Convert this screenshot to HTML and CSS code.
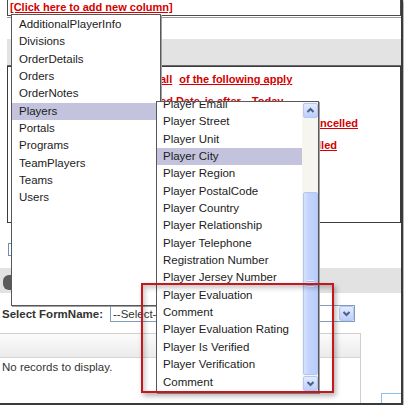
FILE: index.html
```html
<!DOCTYPE html>
<html>
<head>
<meta charset="utf-8">
<title>Form columns</title>
<link rel="stylesheet" href="styles.css">
</head>
<body>
<div class="shot">
  <div class="addbar"><a class="link" href="#">[Click here to add new column]</a></div>
  <div class="toolpanel"><div class="band"></div></div>
  <div class="rules">
    <div class="rule r1"><a class="link gap7" href="#">all</a><a class="link" href="#">of the following apply</a></div>
    <div class="rule r2"><a class="link gap5" href="#">Registered Date</a><a class="link gap11" href="#">is after</a><a class="link" href="#">Today</a></div>
    <div class="rule r3"><a class="link" href="#">Cancelled</a></div>
    <div class="rule r4"><a class="link" href="#">Cancelled</a></div>
  </div>
  <div class="inputrow"><span class="tinybox"></span></div>
  <div class="band2"><span class="pill"></span></div>
  <div class="formrow">
    <label class="formlabel">Select FormName:</label>
    <div class="selectbox">
      <span>--Select--</span>
      <span class="sbtn"><svg width="13" height="13" viewBox="0 0 13 13"><polyline points="3.5,5 6.5,8 9.5,5" fill="none" stroke="#4d6185" stroke-width="2"/></svg></span>
    </div>
  </div>
  <div class="gridwrap">
    <div class="grid">
      <div class="gridhead"></div>
      <div class="norec">No records to display.</div>
    </div>
    <div class="side"><span class="pager"></span></div>
  </div>

  <ul class="dd dd-tables">
    <li>AdditionalPlayerInfo</li>
    <li>Divisions</li>
    <li>OrderDetails</li>
    <li>Orders</li>
    <li>OrderNotes</li>
    <li class="sel">Players</li>
    <li>Portals</li>
    <li>Programs</li>
    <li>TeamPlayers</li>
    <li>Teams</li>
    <li>Users</li>
  </ul>

  <div class="dd dd-cols">
    <ul class="cols-list">
      <li>Player Email</li>
      <li>Player Street</li>
      <li>Player Unit</li>
      <li class="sel">Player City</li>
      <li>Player Region</li>
      <li>Player PostalCode</li>
      <li>Player Country</li>
      <li>Player Relationship</li>
      <li>Player Telephone</li>
      <li>Registration Number</li>
      <li>Player Jersey Number</li>
      <li>Player Evaluation</li>
      <li>Comment</li>
      <li>Player Evaluation Rating</li>
      <li>Player Is Verified</li>
      <li>Player Verification</li>
      <li>Comment</li>
    </ul>
    <div class="scroll">
      <span class="sbtn up"><svg width="13" height="13" viewBox="0 0 13 13"><polyline points="3.5,8 6.5,5 9.5,8" fill="none" stroke="#4d6185" stroke-width="2"/></svg></span>
      <span class="track"></span>
      <span class="thumb"><span class="grip"></span></span>
      <span class="sbtn down"><svg width="13" height="13" viewBox="0 0 13 13"><polyline points="3.5,5 6.5,8 9.5,5" fill="none" stroke="#4d6185" stroke-width="2"/></svg></span>
    </div>
  </div>

  <div class="callout"></div>
</div>
</body>
</html>
```

FILE: styles.css
```css
* {
  box-sizing: border-box;
}

body {
  margin: 0;
  background: #fff;
  font-family: "Liberation Sans", Arial, sans-serif;
  font-size: 11.5px;
  color: #222;
}

.shot {
  position: relative;
  width: 403px;
  height: 405px;
  border-right: 2px solid #3a3a3a;
  border-bottom: 2px solid #3a3a3a;
  box-shadow: 1px 1px 3px rgba(0, 0, 0, 0.45);
  overflow: hidden;
  background: #fff;
}

.link {
  color: #d40000;
  font-weight: bold;
  font-size: 11px;
  text-decoration: underline;
}

.addbar {
  margin-left: 7px;
  height: 16px;
  border: 1px solid #4a4a4a;
  border-top: none;
  padding-left: 2px;
  line-height: 14px;
}

.toolpanel {
  margin: 1px 0 0 7px;
  border-top: 1px solid #9a9a9a;
  border-bottom: 1px solid #6a6a6a;
  padding-top: 21px;
}

.band {
  height: 26px;
  background: #e3e3e3;
}

.rules {
  margin-left: 7px;
  height: 157px;
  border: 1px solid #3a3a3a;
  padding-top: 1px;
}

.rule {
  line-height: 22px;
  height: 22px;
  white-space: nowrap;
}

.r1 { padding-left: 152px; }
.r2 { padding-left: 108px; }
.r3 { padding-left: 298px; }
.r4 { padding-left: 277px; }

.gap7 { margin-right: 7px; }
.gap5 { margin-right: 5px; }
.gap11 { margin-right: 11px; }

.inputrow {
  margin: 20px 0 0 8px;
  height: 13px;
}

.tinybox {
  display: block;
  width: 40px;
  height: 13px;
  border: 1px solid #6b8fc0;
}

.band2 {
  margin-top: 12px;
  height: 25px;
  background: #e2e2e2;
  padding: 7px 0 0 3px;
}

.pill {
  display: block;
  width: 22px;
  height: 15px;
  border-radius: 6px;
  background: #5a5a5a;
}

.formrow {
  margin-top: 12px;
  height: 17px;
  display: flex;
  align-items: center;
}

.formlabel {
  width: 110px;
  padding-left: 2px;
  font-weight: bold;
  color: #333;
}

.selectbox {
  width: 245px;
  height: 17px;
  border: 1px solid #7f9db9;
  display: flex;
  align-items: center;
  justify-content: space-between;
  padding-left: 2px;
  color: #333;
}

.sbtn {
  display: flex;
  align-items: center;
  justify-content: center;
  width: 15px;
  height: 15px;
  border: 1px solid #b4c8f6;
  border-radius: 2px;
  background: linear-gradient(#e3ebfe, #bccffb);
}

.gridwrap {
  margin-top: 11px;
  height: 72px;
  display: flex;
}

.grid {
  width: 363px;
  border-top: 1px solid #cfcfcf;
  border-right: 1px solid #cfcfcf;
}

.gridhead {
  height: 24px;
  background: linear-gradient(#fbfbfb, #ebebeb);
  border-bottom: 1px solid #d4d4d4;
}

.norec {
  line-height: 19px;
  padding-left: 2px;
  color: #333;
}

.side {
  padding: 60px 0 0 20px;
}

.pager {
  display: block;
  width: 20px;
  height: 16px;
  border: 1px solid #8ec0ee;
  border-right: none;
}

/* dropdown lists */
.dd {
  position: absolute;
  margin: 0;
  padding: 0;
  list-style: none;
  background: #fff;
  border: 1px solid #585858;
  box-shadow: 1px 1px 0 #a0a0a0;
  overflow: hidden;
  color: #1c1c1c;
}

.dd li {
  height: 17.35px;
  line-height: 17.35px;
  white-space: nowrap;
}

.dd .sel {
  background: #c3c3dd;
}

.dd-tables {
  left: 11px;
  top: 14px;
  width: 150px;
  height: 292px;
  padding-top: 1px;
}

.dd-tables li {
  padding-left: 7px;
}

.dd-cols {
  left: 156px;
  top: 101px;
  width: 163px;
  height: 292px;
  display: flex;
}

.cols-list {
  flex: 1;
  align-self: flex-start;
  margin: -6px 0 0;
  padding: 0;
  list-style: none;
}

.cols-list li {
  padding-left: 6px;
}

.scroll {
  width: 16px;
  display: flex;
  flex-direction: column;
  padding: 1px 0 1px 1px;
  background: #f6f5f0;
}

.track {
  flex: 1;
}

.thumb {
  height: 183px;
  margin-bottom: 1px;
  border: 1px solid #b2c5f4;
  border-radius: 2px;
  background: linear-gradient(90deg, #d6e2fe, #c2d3fc 40%, #bacdfb);
  display: flex;
  align-items: center;
  justify-content: center;
}

.grip {
  width: 7px;
  height: 7px;
  background: repeating-linear-gradient(#eef3ff 0 1px, #9fb5ea 1px 2px);
}

.callout {
  position: absolute;
  left: 141px;
  top: 283px;
  width: 193px;
  height: 110px;
  border: 2px solid #c8161d;
  box-shadow: 2px 3px 5px rgba(0, 0, 0, 0.3), inset 2px 3px 5px rgba(0, 0, 0, 0.22);
}
```
